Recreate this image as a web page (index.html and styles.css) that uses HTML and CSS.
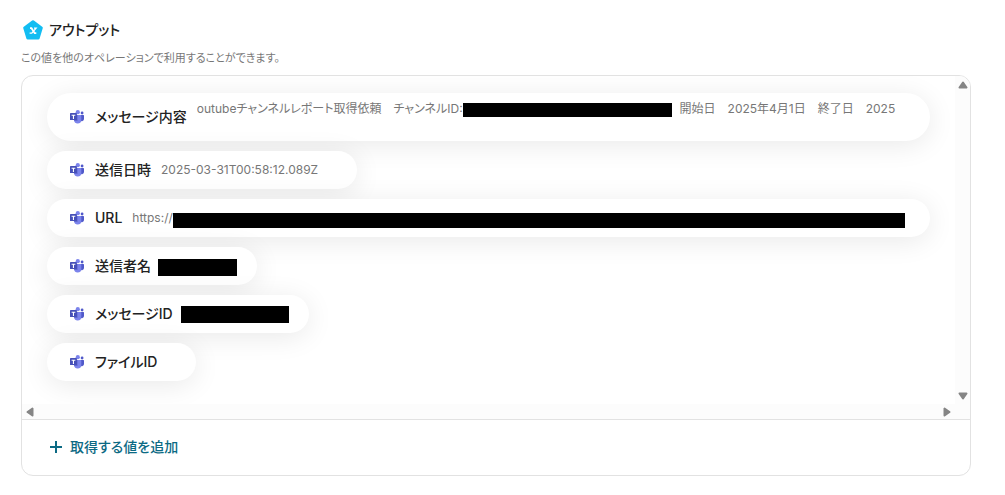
FILE: index.html
```html
<!DOCTYPE html>
<html lang="ja">
<head>
<meta charset="utf-8">
<title>アウトプット</title>
<link rel="stylesheet" href="styles.css">
</head>
<body>
<svg width="0" height="0" class="defs" aria-hidden="true">
  <symbol id="teams" viewBox="0 0 14 14">
    <circle cx="12.100" cy="3" r="1.400" fill="#5059c9"/>
    <path d="M10 5h3.400c.4 0 .6.3.6.6v3.400a2.300 2.300 0 0 1-4 1.500z" fill="#5059c9"/>
    <circle cx="7.800" cy="2.200" r="2.100" fill="#7b83eb"/>
    <path d="M4.500 5h6.200c.4 0 .6.300.6.600v4.600a3.700 3.700 0 0 1-7.300.3z" fill="#7b83eb"/>
    <path d="M4.500 5h3v6H4.200z" fill="#4b53bc" opacity=".6"/>
    <rect x="0" y="3.100" width="6.900" height="7" rx=".6" fill="#4650b8"/>
    <path d="M1.600 4.800h3.700v1H4v3.200H2.900V5.800H1.600z" fill="#fff"/>
  </symbol>
</svg>
<main class="output">
  <header class="heading">
    <svg class="logo" viewBox="0 0 20 20" aria-hidden="true">
      <path d="M10 1.800 18.300 7.900 15.200 18H4.800L1.700 7.900z" fill="#12bdf2" stroke="#12bdf2" stroke-width="3" stroke-linejoin="round"/>
      <path d="M7 8.200h1.500l3.200 5h1.600" fill="none" stroke="#fff" stroke-width="1.800"/>
      <path d="M11 8.200h2.200L8.800 13.200H6.600" fill="none" stroke="#fff" stroke-width="1.200"/>
    </svg>
    <h1 class="title">アウトプット</h1>
  </header>
  <p class="lead">この値を他のオペレーションで利用することができます。</p>
  <section class="panel">
    <div class="scroller">
      <ul class="items">
        <li class="item item-tall"><svg class="icon"><use href="#teams"/></svg><span class="label">メッセージ内容</span><span class="value value-top">outubeチャンネルレポート取得依頼　チャンネルID:<span class="mask mask-channel"></span>開始日　2025年4月1日　終了日　2025</span></li>
        <li class="item item-date"><svg class="icon"><use href="#teams"/></svg><span class="label">送信日時</span><span class="value">2025-03-31T00:58:12.089Z</span></li>
        <li class="item item-wide"><svg class="icon"><use href="#teams"/></svg><span class="label">URL</span><span class="value">https://</span><span class="mask mask-url"></span></li>
        <li class="item item-masked"><svg class="icon"><use href="#teams"/></svg><span class="label">送信者名</span><span class="mask mask-name"></span></li>
        <li class="item item-masked"><svg class="icon"><use href="#teams"/></svg><span class="label">メッセージID</span><span class="mask mask-id"></span></li>
        <li class="item item-empty"><svg class="icon"><use href="#teams"/></svg><span class="label">ファイルID</span></li>
      </ul>
      <div class="bar bar-y" aria-hidden="true">
        <svg class="arrow" viewBox="0 0 10 8"><path d="M5 1.500 8.500 6.500h-7z"/></svg>
        <svg class="arrow" viewBox="0 0 10 8"><path d="M5 6.500 8.500 1.500h-7z"/></svg>
      </div>
      <div class="bar bar-x" aria-hidden="true">
        <svg class="arrow-side" viewBox="0 0 8 10"><path d="M1.500 5 6.500 1.500v7z"/></svg>
        <svg class="arrow-side" viewBox="0 0 8 10"><path d="M6.500 5 1.500 1.500v7z"/></svg>
      </div>
      <div class="corner"></div>
    </div>
    <footer class="footer">
      <button type="button" class="add"><svg class="plus" viewBox="0 0 14 14" aria-hidden="true"><path d="M7 1v12M1 7h12"/></svg>取得する値を追加</button>
    </footer>
  </section>
</main>
</body>
</html>
```
FILE: styles.css
```css
* { box-sizing: border-box; }
body {
  margin: 0;
  background: #fff;
  color: #222;
  font-family: Inter, "Noto Sans CJK JP", sans-serif;
  font-feature-settings: "palt";
}
.defs { position: absolute; }
.output { padding: 20px 34px 19px 21px; }
.heading { display: flex; align-items: center; gap: 6px; height: 20px; padding-left: 2px; }
.logo { width: 20px; height: 20px; }
.title { margin: 0; font-size: 14px; line-height: 20px; font-weight: 500; }
.lead { margin: 9px 0 8px; font-size: 11px; line-height: 18px; color: #777; }
.panel { border: 1px solid #e2e2e2; border-radius: 12px; overflow: hidden; }
.scroller { display: grid; grid-template-columns: minmax(0, 1fr) 15px; }
.items {
  display: flex;
  flex-direction: column;
  align-items: flex-start;
  gap: 10px;
  margin: 0;
  padding: 17px 25px 23px;
  list-style: none;
  overflow: hidden;
}
.item {
  position: relative;
  display: flex;
  align-items: center;
  height: 38px;
  max-width: 100%;
  padding: 0 28px 0 23px;
  border-radius: 24px;
  background: #fff;
  box-shadow: 0 4px 28px rgba(0, 0, 0, 0.09);
  white-space: nowrap;
}
.item-tall { height: 48px; width: 100%; }
.item-date { padding-right: 39px; }
.item-wide { width: 100%; padding-right: 25px; }
.item-masked { padding-right: 20px; }
.item-empty { padding-right: 39px; }
.icon { flex: none; width: 14px; height: 14px; margin-right: 11px; }
.label { flex: none; font-size: 14px; line-height: 20px; font-weight: 500; }
.value { margin-left: 10px; font-size: 12px; line-height: 18px; color: #777; }
.value-top { flex: 1; min-width: 0; overflow: hidden; align-self: flex-start; margin-top: 7px; }
.mask { display: inline-block; height: 15px; background: #000; }
.mask-channel { width: 209px; height: 14px; margin-right: 8px; vertical-align: middle; }
.mask-url { flex: 1; margin-top: 4px; }
.mask-name { width: 79px; height: 17px; margin: 3px 0 0 7px; }
.mask-id { width: 108px; height: 17px; margin-left: 8px; }
.bar { display: flex; justify-content: space-between; align-items: center; background: #fcfcfc; }
.bar-y { flex-direction: column; padding: 5px 0 4px; }
.bar-x { height: 15px; padding: 0 4px; }
.corner { background: #fcfcfc; }
.arrow { width: 12px; height: 8px; }
.arrow-side { width: 8px; height: 12px; }
.bar path { fill: #858585; stroke: #858585; stroke-width: 2; stroke-linejoin: round; }
.footer { padding: 17px 27px 18px; border-top: 1px solid #e2e2e2; }
.add {
  display: flex;
  align-items: center;
  gap: 7px;
  padding: 0;
  border: 0;
  background: none;
  color: #0c6a84;
  font: inherit;
  font-size: 14px;
  line-height: 20px;
  font-weight: 500;
  cursor: pointer;
}
.plus { width: 14px; height: 14px; fill: none; stroke: currentColor; stroke-width: 2; }
```
